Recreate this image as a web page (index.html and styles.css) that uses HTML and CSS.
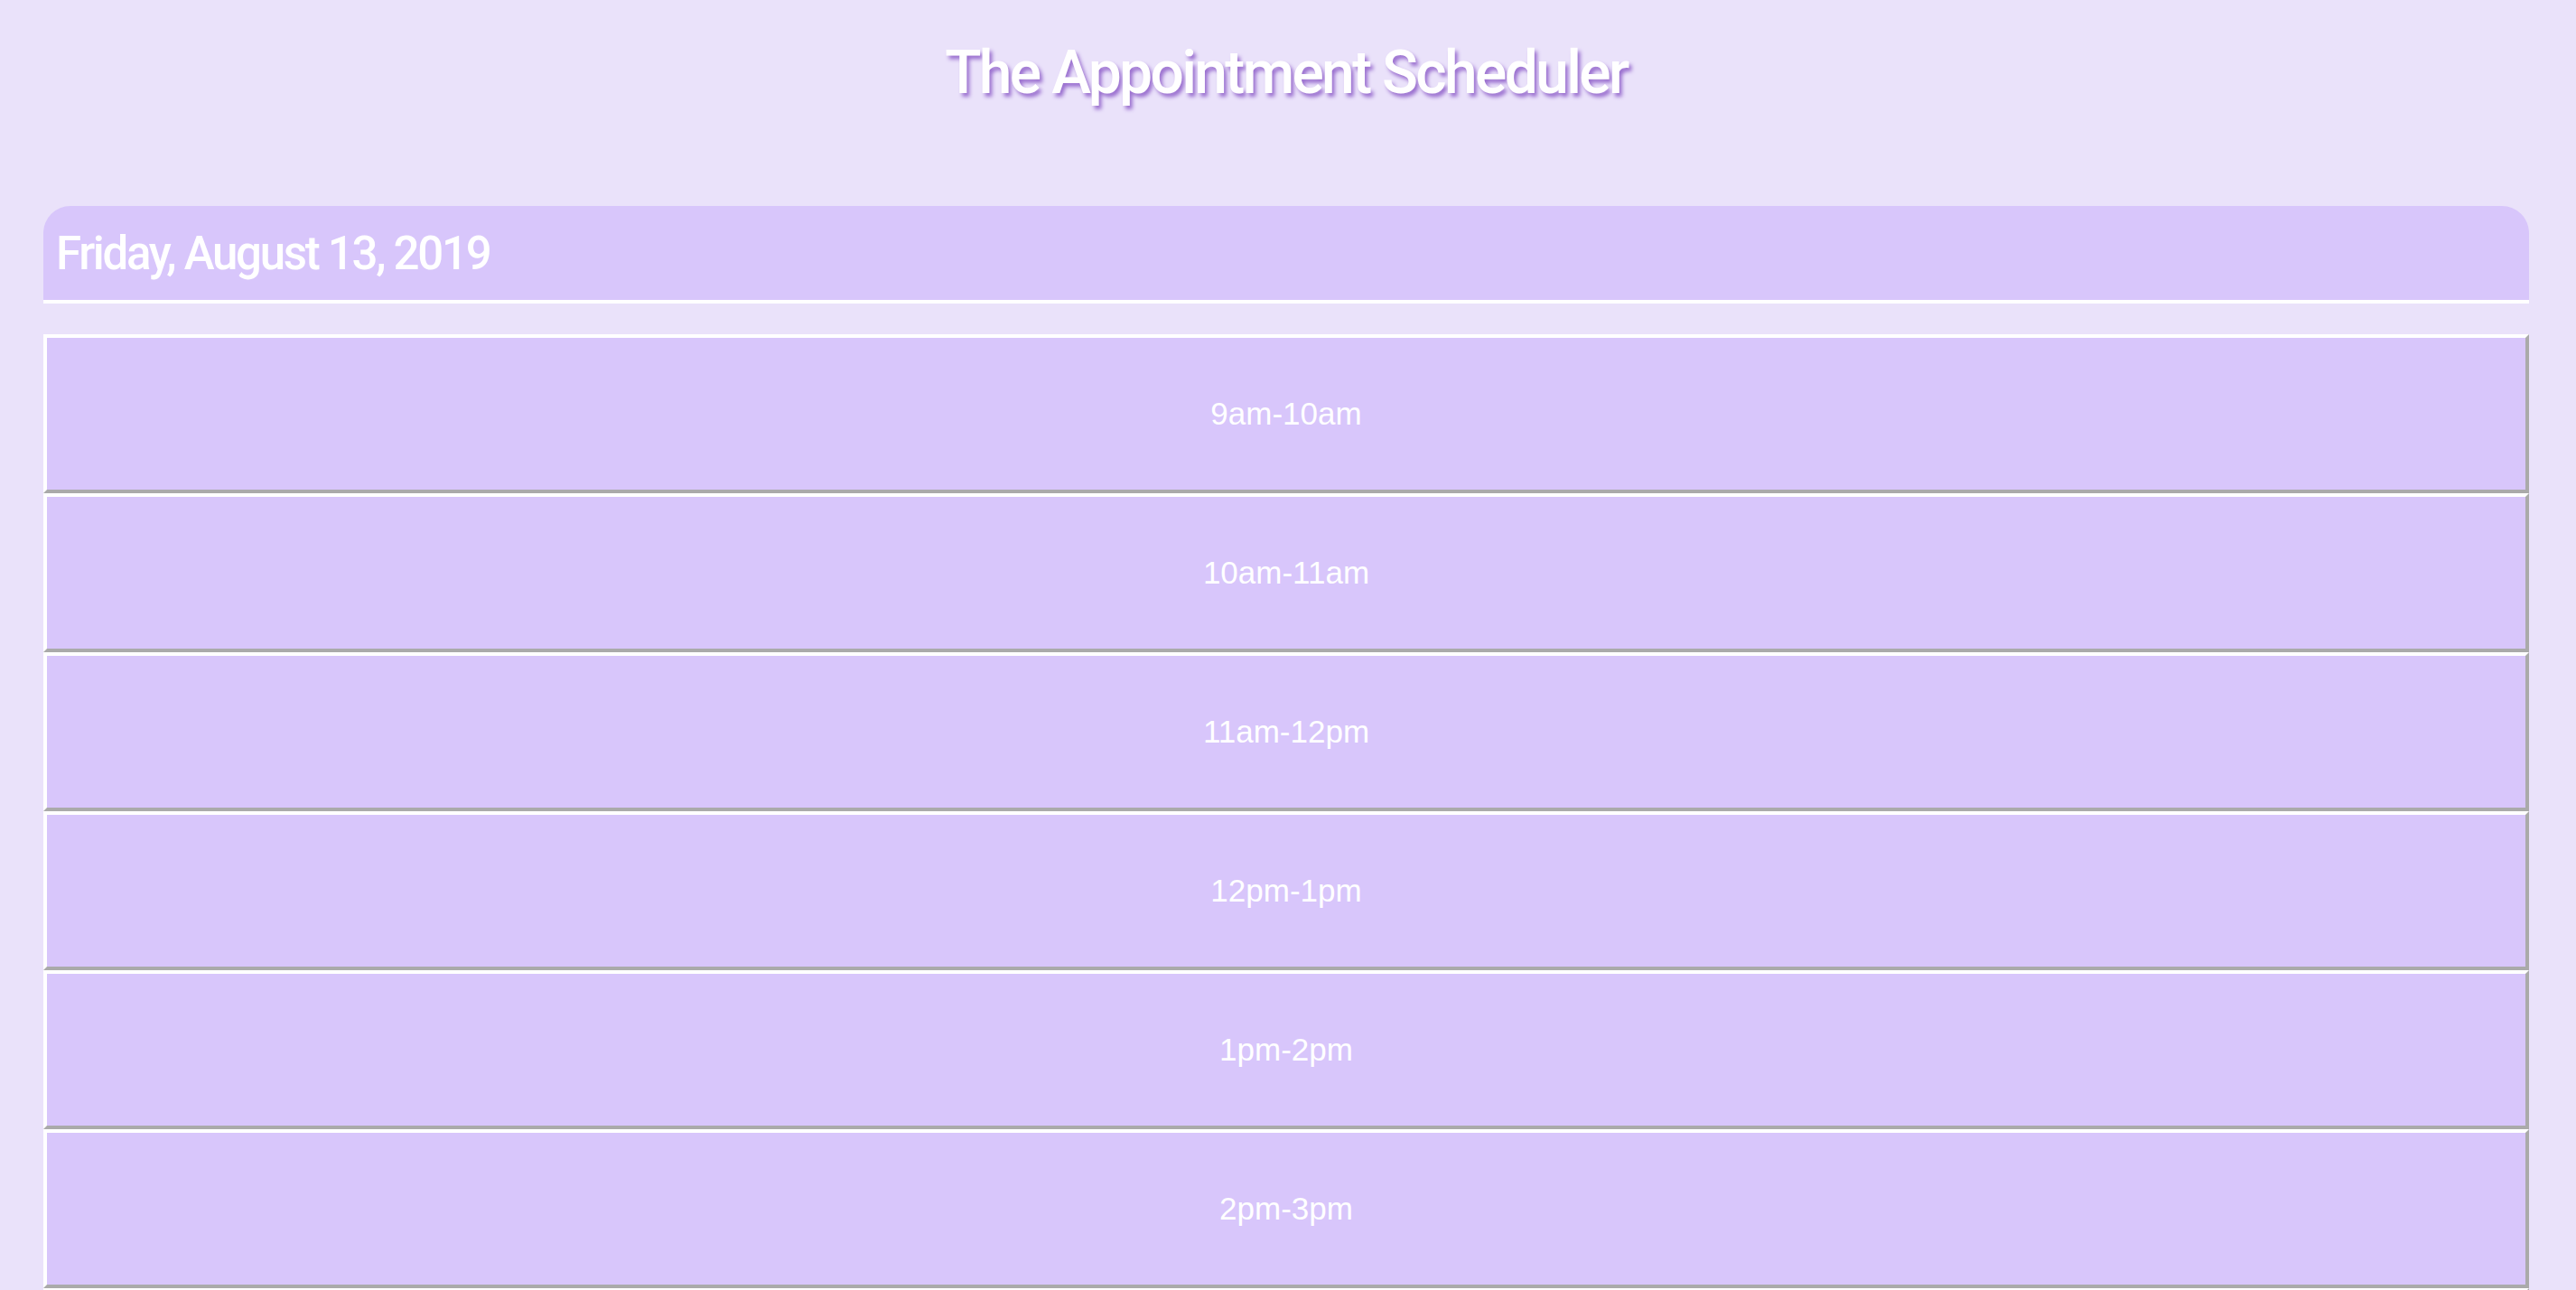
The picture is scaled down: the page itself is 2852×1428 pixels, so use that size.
FILE: index.html
```html
<!DOCTYPE html>
<html lang="en">
<head>
<meta charset="utf-8">
<title>The Appointment Scheduler</title>
<link rel="stylesheet" href="styles.css">
</head>
<body>
  <h1 class="title">The Appointment Scheduler</h1>
  <main class="planner">
    <header class="day-header">
      <span class="day-date">Friday, August 13, 2019</span>
    </header>
    <section class="slots">
      <div class="slot">9am-10am</div>
      <div class="slot">10am-11am</div>
      <div class="slot">11am-12pm</div>
      <div class="slot">12pm-1pm</div>
      <div class="slot">1pm-2pm</div>
      <div class="slot">2pm-3pm</div>
      <div class="slot">3pm-4pm</div>
      <div class="slot">4pm-5pm</div>
    </section>
  </main>
</body>
</html>
```
FILE: styles.css
```css
html, body {
  margin: 0;
  padding: 0;
}

body {
  background: #eae2fa;
  font-family: "Liberation Sans", Arial, sans-serif;
  padding: 48px 52px 0 48px;
}

.title {
  margin: 0;
  text-align: center;
  font-family: Roboto, "Noto Sans", sans-serif;
  font-weight: 500;
  font-size: 66px;
  line-height: 65px;
  letter-spacing: -2.7px;
  color: #ffffff;
  text-shadow: 3px 4px 4px #9a6fcf;
}

.planner {
  display: flex;
  flex-direction: column;
  margin-top: 115px;
}

.day-header {
  display: flex;
  align-items: center;
  height: 104px;
  padding-left: 14px;
  background: #d8c6fb;
  border-radius: 30px 30px 0 0;
  border-bottom: 4px solid #ffffff;
}

.day-date {
  font-family: Roboto, "Noto Sans", sans-serif;
  font-weight: 500;
  font-size: 51px;
  letter-spacing: -2.3px;
  color: #ffffff;
}

.slots {
  display: flex;
  flex-direction: column;
  margin-top: 34px;
}

.slot {
  display: flex;
  align-items: center;
  justify-content: center;
  height: 168px;
  background: #d8c6fb;
  border-style: solid;
  border-width: 4px;
  border-color: #ffffff #aaaaaa #aaaaaa #ffffff;
  color: #ffffff;
  font-size: 35px;
}
```
